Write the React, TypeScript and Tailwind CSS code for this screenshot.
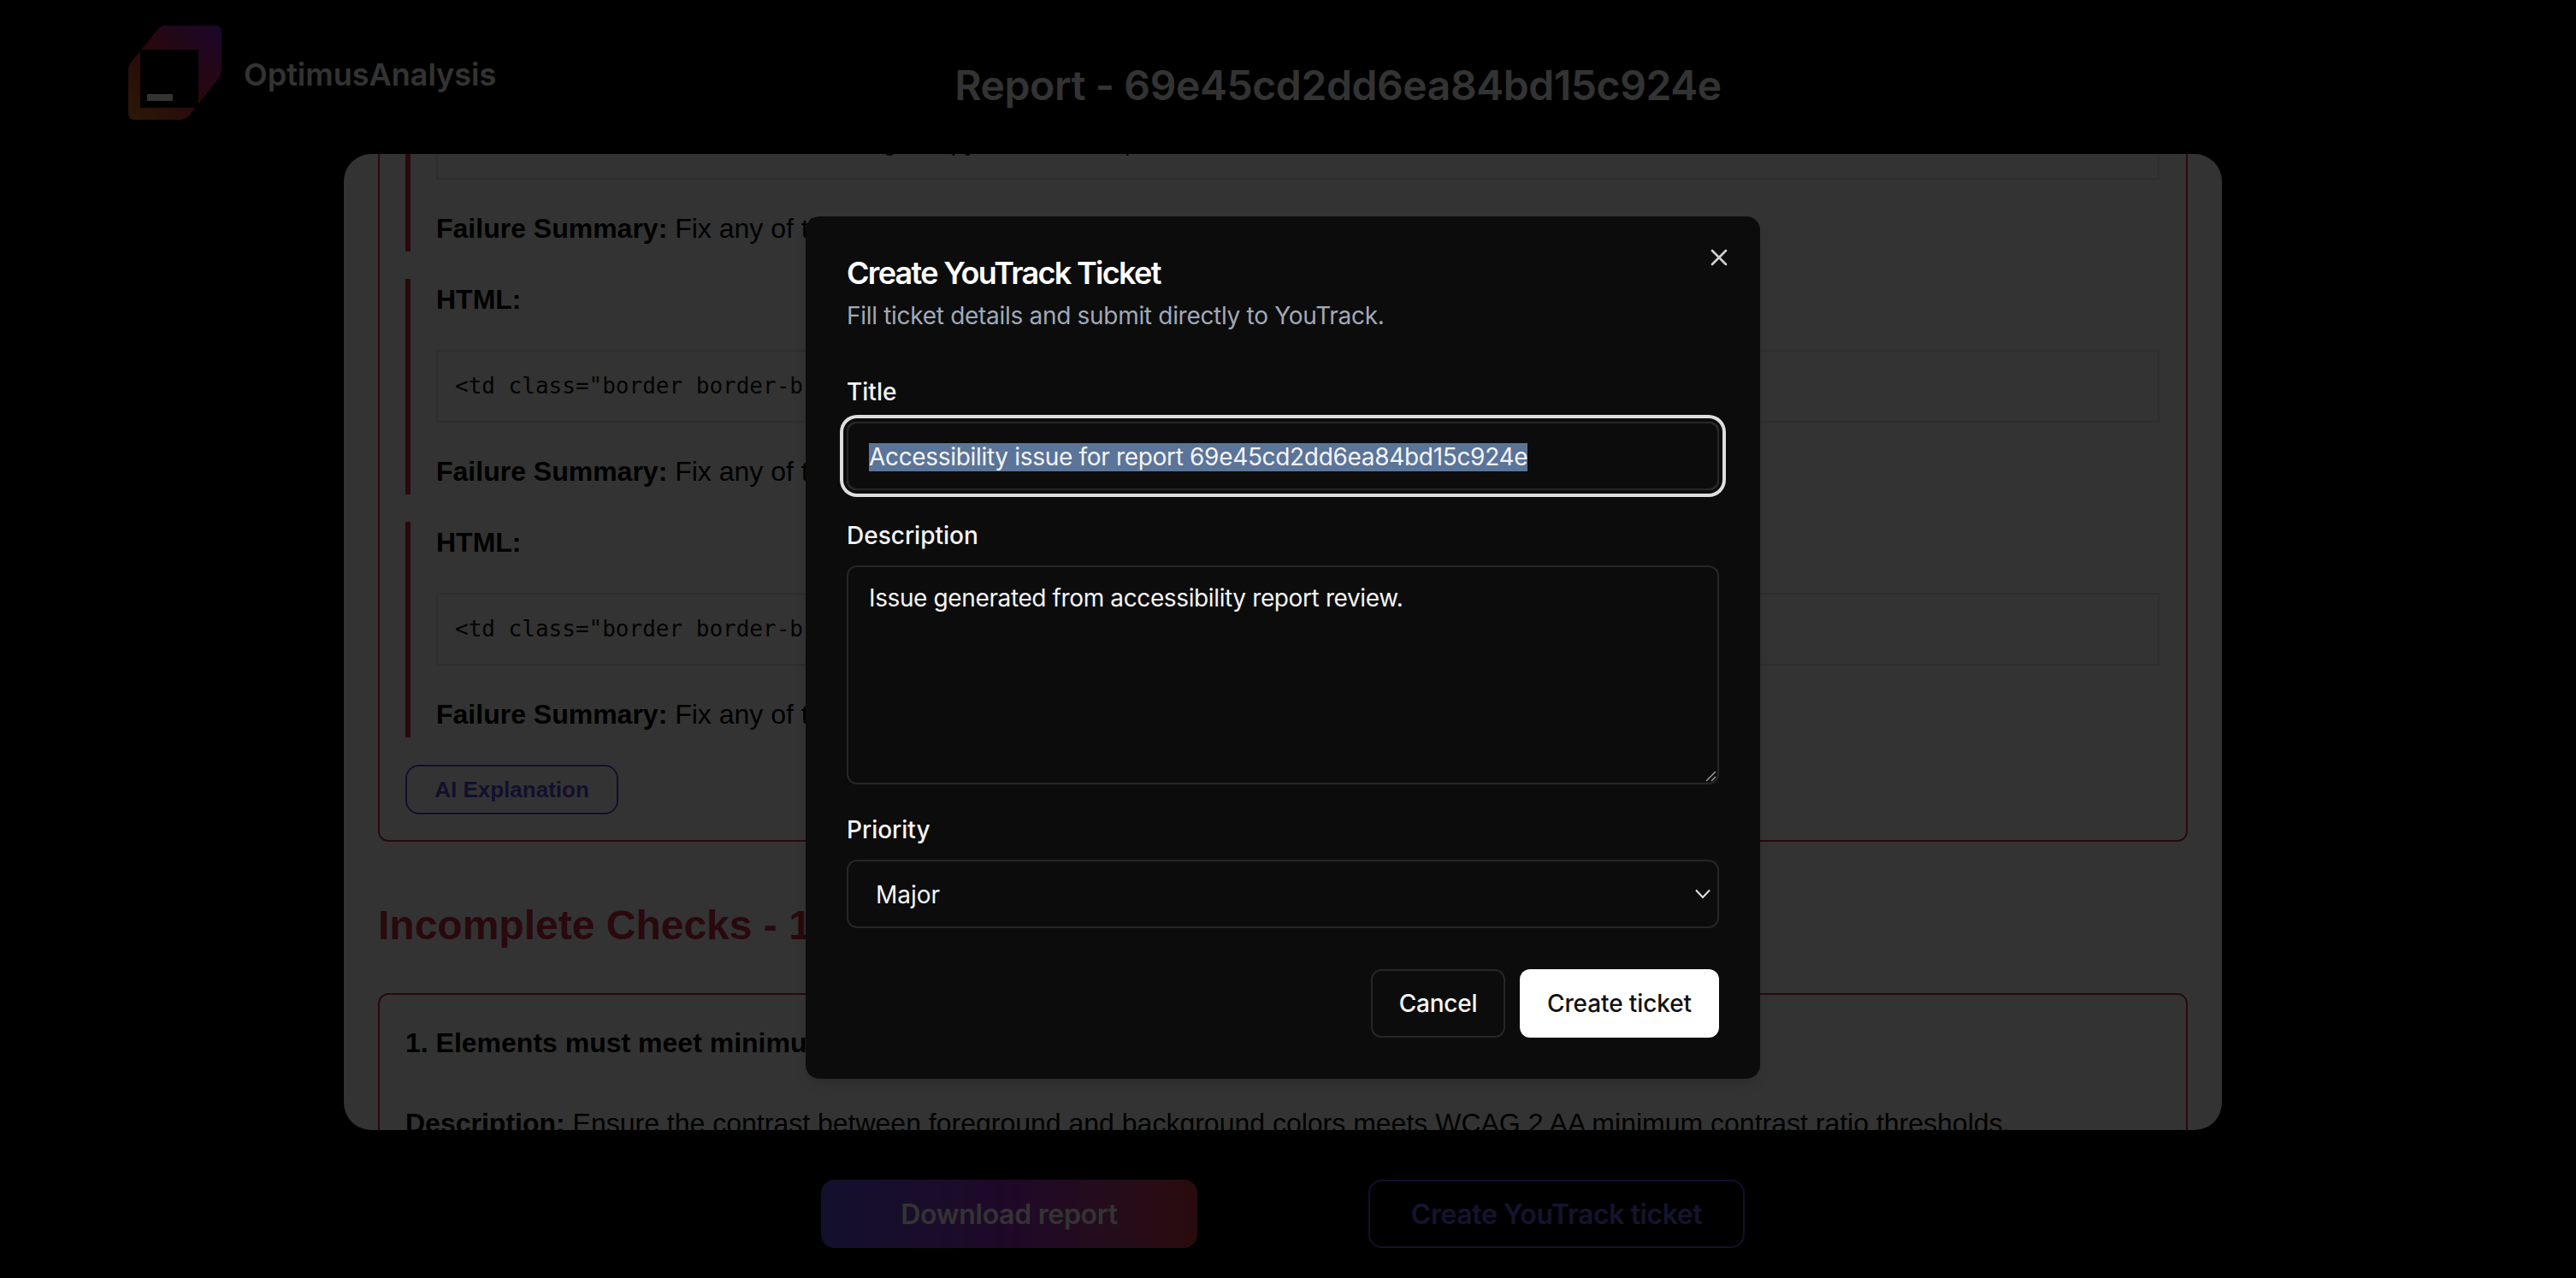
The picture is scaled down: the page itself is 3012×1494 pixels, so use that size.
import React from 'react';
import { X } from 'lucide-react';

const ReportItem: React.FC = () => (
  <div className="border-l-[6px] border-[#cc2e44] pl-[30px] pb-[2.5px] mb-[32.5px]">
    <p className="text-[32px] leading-[48px] font-bold text-black">HTML:</p>
    <div className="mt-[35px] h-[85px] border-2 border-[#e6e6e6] bg-white px-[20px] flex items-center">
      <code className="font-['DejaVu_Sans_Mono',monospace] text-[26px] text-[#111] whitespace-nowrap">
        {'<td class="border border-b text-gold-py text-base px-4">Action</td>'}
      </code>
    </div>
    <p className="mt-[33px] text-[32px] leading-[48px] text-black">
      <span className="font-bold">Failure Summary:</span> Fix any of the following: Element has insufficient color contrast
    </p>
  </div>
);

const FieldLabel: React.FC<{ children: React.ReactNode }> = ({ children }) => (
  <div className="h-[40px] pt-[1px] text-[28px] leading-[40px] font-medium text-[#f5f5f5]">{children}</div>
);

const App: React.FC = () => {
  return (
    <div className="h-[1494px] w-[3012px] overflow-hidden bg-black">
      <div className="relative h-[1494px] w-[3000px] font-['Inter',sans-serif]">
        <header className="flex h-[180px] items-start pl-[150px] pt-[30px]">
          <svg width="110" height="110" viewBox="0 0 110 110" className="shrink-0">
            <defs>
              <linearGradient id="logoGrad" x1="0" y1="110" x2="110" y2="0" gradientUnits="userSpaceOnUse">
                <stop offset="0" stopColor="#d97a20" />
                <stop offset="0.5" stopColor="#c82840" />
                <stop offset="1" stopColor="#8a22d8" />
              </linearGradient>
            </defs>
            <path
              d="M42 0H102Q109 0 109 7V52Q109 57 106 61L73 103Q68 110 60 110H7Q0 110 0 103V52Q0 47 3 43L34 5Q38 0 42 0Z"
              fill="url(#logoGrad)"
            />
            <rect x="14" y="28" width="68" height="68" fill="#000" />
            <rect x="22" y="80" width="30" height="8" fill="#fff" />
          </svg>
          <div className="ml-[25px] mt-[33px] text-[36px] leading-[48px] font-semibold text-white">OptimusAnalysis</div>
          <h1 className="ml-[536px] mt-[36px] text-[48px] leading-[68px] font-semibold tracking-[-0.4px] text-white whitespace-nowrap">
            Report - 69e45cd2dd6ea84bd15c924e
          </h1>
        </header>

        <main className="mx-auto h-[1141px] w-[2196px] overflow-hidden rounded-[32px] bg-white px-[40px] font-['Liberation_Sans',Arial,sans-serif]">
          <div className="-mt-[170px]">
            <section className="rounded-xl border-2 border-[#cc2e44] pl-[30px] pr-[31px] pt-[30px] pb-[30px]">
              <ReportItem />
              <ReportItem />
              <ReportItem />
              <div className="flex h-[58px] w-[249px] items-center justify-center rounded-2xl border-2 border-[#5b4fe0] text-[26px] font-bold text-[#5b4fe0]">
                AI Explanation
              </div>
            </section>
            <h2 className="mt-[66px] mb-[47px] text-[48px] leading-[64px] font-bold text-[#cc2e44]">
              Incomplete Checks - 1
            </h2>
            <section className="rounded-xl border-2 border-[#cc2e44] pl-[30px] pr-[31px] pt-[32px]">
              <h3 className="text-[32px] leading-[48px] font-bold text-black">
                1. Elements must meet minimum color contrast ratio thresholds
              </h3>
              <p className="mt-[46px] text-[32px] leading-[48px] text-black whitespace-nowrap">
                <span className="font-bold">Description:</span> Ensure the contrast between foreground and background
                colors meets WCAG 2 AA minimum contrast ratio thresholds.
              </p>
            </section>
          </div>
        </main>

        <footer className="flex justify-center gap-[200px] pt-[58px]">
          <button className="h-[80px] w-[440px] rounded-2xl bg-gradient-to-r from-[#5a50e0] via-[#9a28c8] to-[#d03a40] pt-[2px] text-[32px] font-semibold tracking-[-0.3px] text-white">
            Download report
          </button>
          <button className="h-[80px] w-[440px] rounded-2xl border-2 border-[#5a50e0] pt-[2px] text-[32px] font-semibold tracking-[-0.4px] text-[#6a60e0]">
            Create YouTrack ticket
          </button>
        </footer>

        {/* dialog over the dimmed page */}
        <div className="absolute inset-0 flex justify-center bg-black/80 pt-[253px]">
          <div className="relative h-[1008px] w-[1116px] rounded-2xl bg-[#0c0c0c] p-[48px] shadow-lg">
            <button className="absolute right-[32px] top-[32px] text-[#cfcfcf]">
              <X className="h-8 w-8" strokeWidth={2} />
            </button>
            <h2 className="-mt-[2px] text-[36px] leading-[40px] font-semibold tracking-[-1.7px] text-white">Create YouTrack Ticket</h2>
            <p className="mt-[10px] text-[28px] leading-[40px] tracking-[-0.3px] text-[#a1a9b8]">Fill ticket details and submit directly to YouTrack.</p>

            <div className="mt-12">
              <FieldLabel>Title</FieldLabel>
              <div className="mt-4 flex h-[80px] items-center rounded-xl border-2 border-[#262626] px-[24px] pt-[2px] text-[28px] tracking-[-0.32px] text-[#f5f5f5] ring-4 ring-[#dedede] ring-offset-4 ring-offset-[#0c0c0c]">
                <span className="bg-[#5b7499] leading-[33px]">Accessibility issue for report 69e45cd2dd6ea84bd15c924e</span>
              </div>
            </div>

            <div className="mt-8">
              <FieldLabel>Description</FieldLabel>
              <div className="relative mt-4 h-[256px] rounded-xl border-2 border-[#262626] px-[24px] pt-[16px] text-[28px] leading-[40px] tracking-[-0.38px] text-[#f5f5f5]">
                Issue generated from accessibility report review.
                <svg width="14" height="14" viewBox="0 0 14 14" className="absolute bottom-[1px] right-[1px]" stroke="#9a9a9a" strokeWidth="1.5">
                  <path d="M2 13L13 2M8 13L13 8" />
                </svg>
              </div>
            </div>

            <div className="mt-8">
              <FieldLabel>Priority</FieldLabel>
              <div className="mt-4 flex h-[80px] items-center justify-between rounded-xl border-2 border-[#262626] pl-[32px] pr-[8px] text-[28px] text-[#f5f5f5]">
                <span className="pt-[2px]">Major</span>
                <svg width="18" height="12" viewBox="0 0 18 12" fill="none" stroke="#e0e0e0" strokeWidth="2">
                  <path d="M1 1.5L9 10L17 1.5" />
                </svg>
              </div>
            </div>

            <div className="mt-12 flex justify-end gap-[17px]">
              <button className="h-[80px] w-[157px] rounded-xl border-2 border-[#262626] text-[28px] font-medium tracking-[-0.2px] text-[#f5f5f5]">
                Cancel
              </button>
              <button className="h-[80px] w-[233px] rounded-xl bg-white text-[28px] font-medium tracking-[-0.1px] text-[#111]">
                Create ticket
              </button>
            </div>
          </div>
        </div>
      </div>
    </div>
  );
};

export default App;
